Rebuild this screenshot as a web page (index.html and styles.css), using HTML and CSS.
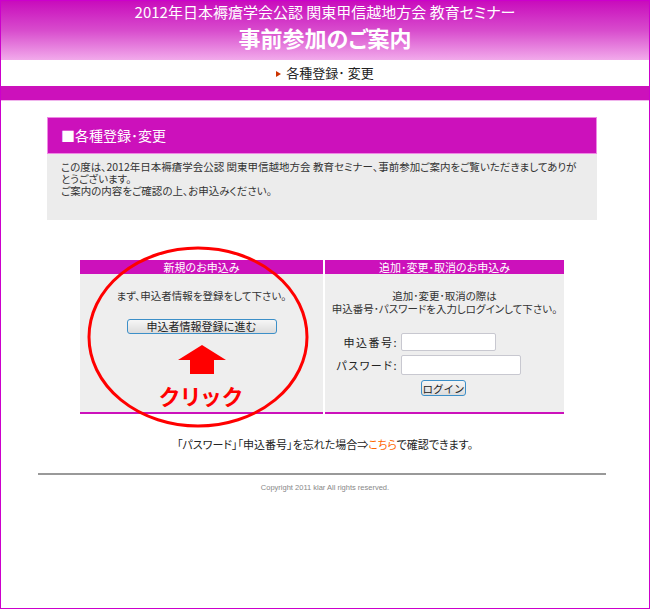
FILE: index.html
```html
<!DOCTYPE html>
<html lang="ja">
<head>
    <meta charset="UTF-8">
    <title>事前参加のご案内</title>
    <link rel="stylesheet" href="styles.css">
</head>
<body>
<div class="page">
    <header class="site-header">
        <p class="site-sub">2012年日本褥瘡学会公認 関東甲信越地方会 教育セミナー</p>
        <h1 class="site-title">事前参加のご案内</h1>
    </header>
    <nav class="crumb"><span class="crumb-mark"></span>各種登録･ 変更</nav>
    <div class="band"></div>

    <main class="content">
        <section class="intro">
            <h2 class="intro-title">■各種登録･変更</h2>
            <div class="intro-body">
                <p>この度は、2012年日本褥瘡学会公認 関東甲信越地方会 教育セミナー、事前参加ご案内をご覧いただきましてありがとうございます。<br>ご案内の内容をご確認の上、お申込みください。</p>
            </div>
        </section>

        <div class="panels">
            <div class="panel panel-new">
                <h3 class="panel-head">新規のお申込み</h3>
                <div class="panel-body">
                    <p class="panel-text">まず、申込者情報を登録をして下さい。</p>
                    <button class="btn btn-wide">申込者情報登録に進む</button>
                    <svg class="arrow" width="50" height="30" viewBox="0 0 50 30">
                        <polygon points="25,0 49,15 37,15 37,29 13,29 13,15 1,15" fill="#ff0000"/>
                    </svg>
                    <div class="click">クリック</div>
                </div>
                <!-- 赤い丸の注釈 -->
                <svg class="ring" width="250" height="190" viewBox="0 0 250 190">
                    <ellipse cx="130" cy="93" rx="109" ry="89" fill="none" stroke="#ff0000" stroke-width="3"/>
                </svg>
            </div>
            <div class="panel">
                <h3 class="panel-head">追加･変更･取消のお申込み</h3>
                <div class="panel-body">
                    <p class="panel-text">追加･変更･取消の際は<br>申込番号･パスワードを入力しログインして下さい。</p>
                    <div class="login">
                        <div class="login-row">
                            <label>申込番号:</label>
                            <input type="text" class="field field-short">
                        </div>
                        <div class="login-row">
                            <label>パスワード:</label>
                            <input type="password" class="field field-long">
                        </div>
                        <button class="btn btn-login">ログイン</button>
                    </div>
                </div>
            </div>
        </div>

        <p class="forgot">「パスワード」「申込番号」を忘れた場合⇒<a href="#">こちら</a>で確認できます。</p>
        <hr class="rule">
        <p class="copy">Copyright 2011 klar All rights reserved.</p>
    </main>
</div>
</body>
</html>
```

FILE: styles.css
```css
html, body {
    margin: 0;
    padding: 0;
}
body {
    font-family: "Noto Sans CJK JP", "Liberation Sans", sans-serif;
    font-feature-settings: "palt";
    color: #333;
    background: #fff;
}
p, h1, h2, h3 {
    margin: 0;
}
.page {
    border: 1px solid #cc00cc;
    height: 100vh;
    box-sizing: border-box;
    overflow: hidden;
}

/* ヘッダー */
.site-header {
    height: 59px;
    background: linear-gradient(to bottom, #c90cbc 0%, #d84ccd 50%, #f2aaeb 100%);
    color: #fff;
    text-align: center;
}
.site-sub {
    font-size: 15px;
    line-height: 18px;
    padding-top: 2px;
}
.site-title {
    font-size: 22px;
    font-weight: bold;
    line-height: 28px;
    margin-top: 2px;
}
.crumb {
    height: 26px;
    line-height: 26px;
    text-align: center;
    font-size: 13px;
    color: #222;
}
.crumb-mark {
    display: inline-block;
    width: 0;
    height: 0;
    border-left: 5px solid #cc3300;
    border-top: 3px solid transparent;
    border-bottom: 3px solid transparent;
    margin-right: 5px;
    vertical-align: 1px;
}
.band {
    height: 14px;
    background: #cc11bb;
    border-bottom: 1px solid #f0b4ec;
}

/* 本文 */
.content {
    padding-top: 16px;
}
.intro {
    width: 550px;
    margin-left: 46px;
}
.intro-title {
    background: #cc11bb;
    border: 1px solid #ee88e4;
    line-height: 35px;
    padding-left: 13px;
    box-sizing: border-box;
    height: 37px;
    color: #fff;
    font-size: 14px;
    font-weight: normal;
}
.intro-body {
    background: #ececec;
    height: 66px;
    padding: 7px 16px 0 14px;
    box-sizing: border-box;
    font-size: 10.5px;
    line-height: 12px;
}

.panels {
    display: grid;
    grid-template-columns: 243px 239px;
    column-gap: 2px;
    margin: 40px 0 0 79px;
}
.panel {
    position: relative;
    background: #eeeeee;
    border-bottom: 2px solid #cc11bb;
    display: flex;
    flex-direction: column;
}
.panel-head {
    background: #cc11bb;
    color: #fff;
    font-size: 11px;
    font-weight: normal;
    height: 14px;
    line-height: 14px;
    text-align: center;
}
.panel-body {
    height: 138px;
    display: flex;
    flex-direction: column;
    align-items: center;
    font-size: 10.5px;
}
.panel-text {
    margin-top: 16px;
    line-height: 12.5px;
    text-align: center;
}
.btn {
    font-family: inherit;
    font-size: 11px;
    color: #222;
    background: linear-gradient(to bottom, #f6f6f6, #dcdcdc);
    border: 1px solid #3c8fc8;
    border-radius: 3px;
    padding: 0;
    line-height: 13px;
    white-space: nowrap;
}
.btn-wide {
    width: 150px;
    height: 15px;
    margin-top: 16px;
}
.arrow {
    display: block;
    margin-top: 11px;
}
.click {
    color: #ff0000;
    font-size: 22px;
    font-weight: bold;
    line-height: 24px;
    margin-top: 8px;
    letter-spacing: 2px;
}
.ring {
    position: absolute;
    left: -12px;
    top: -16px;
    pointer-events: none;
}

.login {
    margin-top: 18px;
    display: flex;
    flex-direction: column;
    align-items: flex-start;
    padding-left: 76px;
    align-self: stretch;
}
.login-row {
    display: flex;
    align-items: center;
    margin-bottom: 4px;
}
.login-row label {
    width: 76px;
    margin-left: -76px;
    text-align: right;
    padding-right: 3px;
    box-sizing: border-box;
    color: #222;
    font-size: 11px;
    letter-spacing: 1.5px;
}
.field {
    border: 1px solid #c8c8d0;
    border-radius: 2px;
    background: #fff;
    padding: 0;
    box-sizing: border-box;
}
.field-short {
    width: 95px;
    height: 18px;
}
.field-long {
    width: 120px;
    height: 20px;
}
.btn-login {
    width: 45px;
    height: 16px;
    margin-left: 20px;
    margin-top: 1px;
    font-size: 10.5px;
}

.forgot {
    text-align: center;
    font-size: 11px;
    margin-top: 22px;
    color: #222;
}
.forgot a {
    color: #ff6600;
    text-decoration: none;
}
.rule {
    width: 568px;
    margin: 21px 0 0 37px;
    border: none;
    border-top: 2px solid #999;
}
.copy {
    font-family: "Liberation Sans", sans-serif;
    font-size: 7.5px;
    color: #888;
    text-align: center;
    margin-top: 8px;
}
```
